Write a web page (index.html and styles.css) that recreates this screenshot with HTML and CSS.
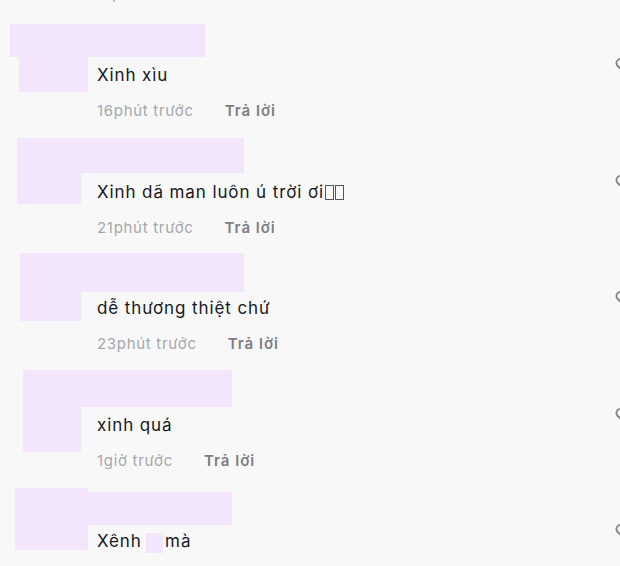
FILE: index.html
```html
<!DOCTYPE html>
<html lang="vi">
<head>
    <meta charset="UTF-8">
    <meta name="viewport" content="width=device-width, initial-scale=1.0">
    <title>Bình luận</title>
    <link rel="stylesheet" href="styles.css">
</head>
<body>
    <!-- phần cuối của bình luận phía trên -->
    <div class="meta cut-meta"><span class="time">17phút trước</span><span class="reply">Trả lời</span></div>

    <div class="list">
        <div class="comment c1">
            <span class="mask name-mask"></span>
            <span class="mask avatar-mask"></span>
            <div class="content">
                <p class="text">Xinh xìu</p>
                <div class="meta"><span class="time">16phút trước</span><span class="reply">Trả lời</span></div>
            </div>
            <svg class="like" viewBox="0 0 24 24"><path d="M12 20.5 4.4 13.1a4.9 4.9 0 0 1 7-6.9l.6.6.6-.6a4.9 4.9 0 0 1 7 6.9Z"/></svg>
        </div>

        <div class="comment c2">
            <span class="mask name-mask"></span>
            <span class="mask avatar-mask"></span>
            <div class="content">
                <p class="text">Xinh dã man luôn ú trời ơi<span class="tofu"></span><span class="tofu"></span></p>
                <div class="meta"><span class="time">21phút trước</span><span class="reply">Trả lời</span></div>
            </div>
            <svg class="like" viewBox="0 0 24 24"><path d="M12 20.5 4.4 13.1a4.9 4.9 0 0 1 7-6.9l.6.6.6-.6a4.9 4.9 0 0 1 7 6.9Z"/></svg>
        </div>

        <div class="comment c3">
            <span class="mask name-mask"></span>
            <span class="mask avatar-mask"></span>
            <div class="content">
                <p class="text">dễ thương thiệt chứ</p>
                <div class="meta"><span class="time">23phút trước</span><span class="reply">Trả lời</span></div>
            </div>
            <svg class="like" viewBox="0 0 24 24"><path d="M12 20.5 4.4 13.1a4.9 4.9 0 0 1 7-6.9l.6.6.6-.6a4.9 4.9 0 0 1 7 6.9Z"/></svg>
        </div>

        <div class="comment c4">
            <span class="mask name-mask"></span>
            <span class="mask avatar-mask"></span>
            <div class="content">
                <p class="text">xinh quá</p>
                <div class="meta"><span class="time">1giờ trước</span><span class="reply">Trả lời</span></div>
            </div>
            <svg class="like" viewBox="0 0 24 24"><path d="M12 20.5 4.4 13.1a4.9 4.9 0 0 1 7-6.9l.6.6.6-.6a4.9 4.9 0 0 1 7 6.9Z"/></svg>
        </div>

        <div class="comment c5">
            <span class="mask name-mask"></span>
            <span class="mask avatar-mask"></span>
            <div class="content">
                <p class="text">Xênh <span class="emoji-mask"></span> mà</p>
            </div>
            <svg class="like" viewBox="0 0 24 24"><path d="M12 20.5 4.4 13.1a4.9 4.9 0 0 1 7-6.9l.6.6.6-.6a4.9 4.9 0 0 1 7 6.9Z"/></svg>
        </div>
    </div>
</body>
</html>
```
FILE: styles.css
```css
body {
    margin: 0;
    padding: 0;
    overflow: hidden;
    background-color: #f8f8f8;
    font-family: Inter, "Noto Sans", sans-serif;
    color: #161823;
}

/* dòng thời gian / trả lời */
.meta {
    display: flex;
    gap: 31px;
    margin-top: 15px;
    font-size: 15px;
    line-height: 20px;
    letter-spacing: 0.7px;
}

.time {
    color: #a7a7ab;
}

.reply {
    color: #7d7e84;
    font-weight: 600;
    letter-spacing: 1px;
}

.cut-meta {
    margin-top: -16px;
    padding-left: 97px;
}

.list {
    margin-top: 20px;
}

/* một bình luận */
.comment {
    position: relative;
    display: flex;
    height: 116.5px;
    box-sizing: border-box;
    padding: 40px 0 0 97px;
}

.content {
    flex: 1;
}

.text {
    margin: 0;
    font-size: 17px;
    line-height: 22px;
    letter-spacing: 0.9px;
}

.like {
    width: 20px;
    height: 20px;
    margin-top: -9px;
    margin-right: -14px;
    fill: none;
    stroke: #86878c;
    stroke-width: 2.4;
}

/* ô che tên và ảnh đại diện */
.mask {
    position: absolute;
    background-color: #f3e5fc;
}

.c1 .name-mask { left: 10px; top: 0; width: 195px; height: 33px; }
.c1 .avatar-mask { left: 19px; top: 33px; width: 69px; height: 35px; }

.c2 .name-mask { left: 17px; top: -3px; width: 227px; height: 35px; }
.c2 .avatar-mask { left: 17px; top: 32px; width: 64px; height: 31px; }

.c3 .name-mask { left: 20px; top: -4px; width: 224px; height: 39px; }
.c3 .avatar-mask { left: 20px; top: 35px; width: 61px; height: 29px; }

.c4 .name-mask { left: 23px; top: -4px; width: 209px; height: 37px; }
.c4 .avatar-mask { left: 23px; top: 33px; width: 58px; height: 45px; }

.c5 .avatar-mask { left: 15px; top: -2px; width: 73px; height: 62px; }
.c5 .name-mask { left: 88px; top: 2px; width: 144px; height: 33px; }

.tofu {
    display: inline-block;
    width: 7px;
    height: 13px;
    margin-left: 1px;
    border: 1px solid #55565c;
    vertical-align: -2px;
}

.emoji-mask {
    display: inline-block;
    width: 17px;
    height: 20px;
    margin-left: -1px;
    margin-right: -4px;
    background-color: #f3e5fc;
    vertical-align: -6px;
}
```
